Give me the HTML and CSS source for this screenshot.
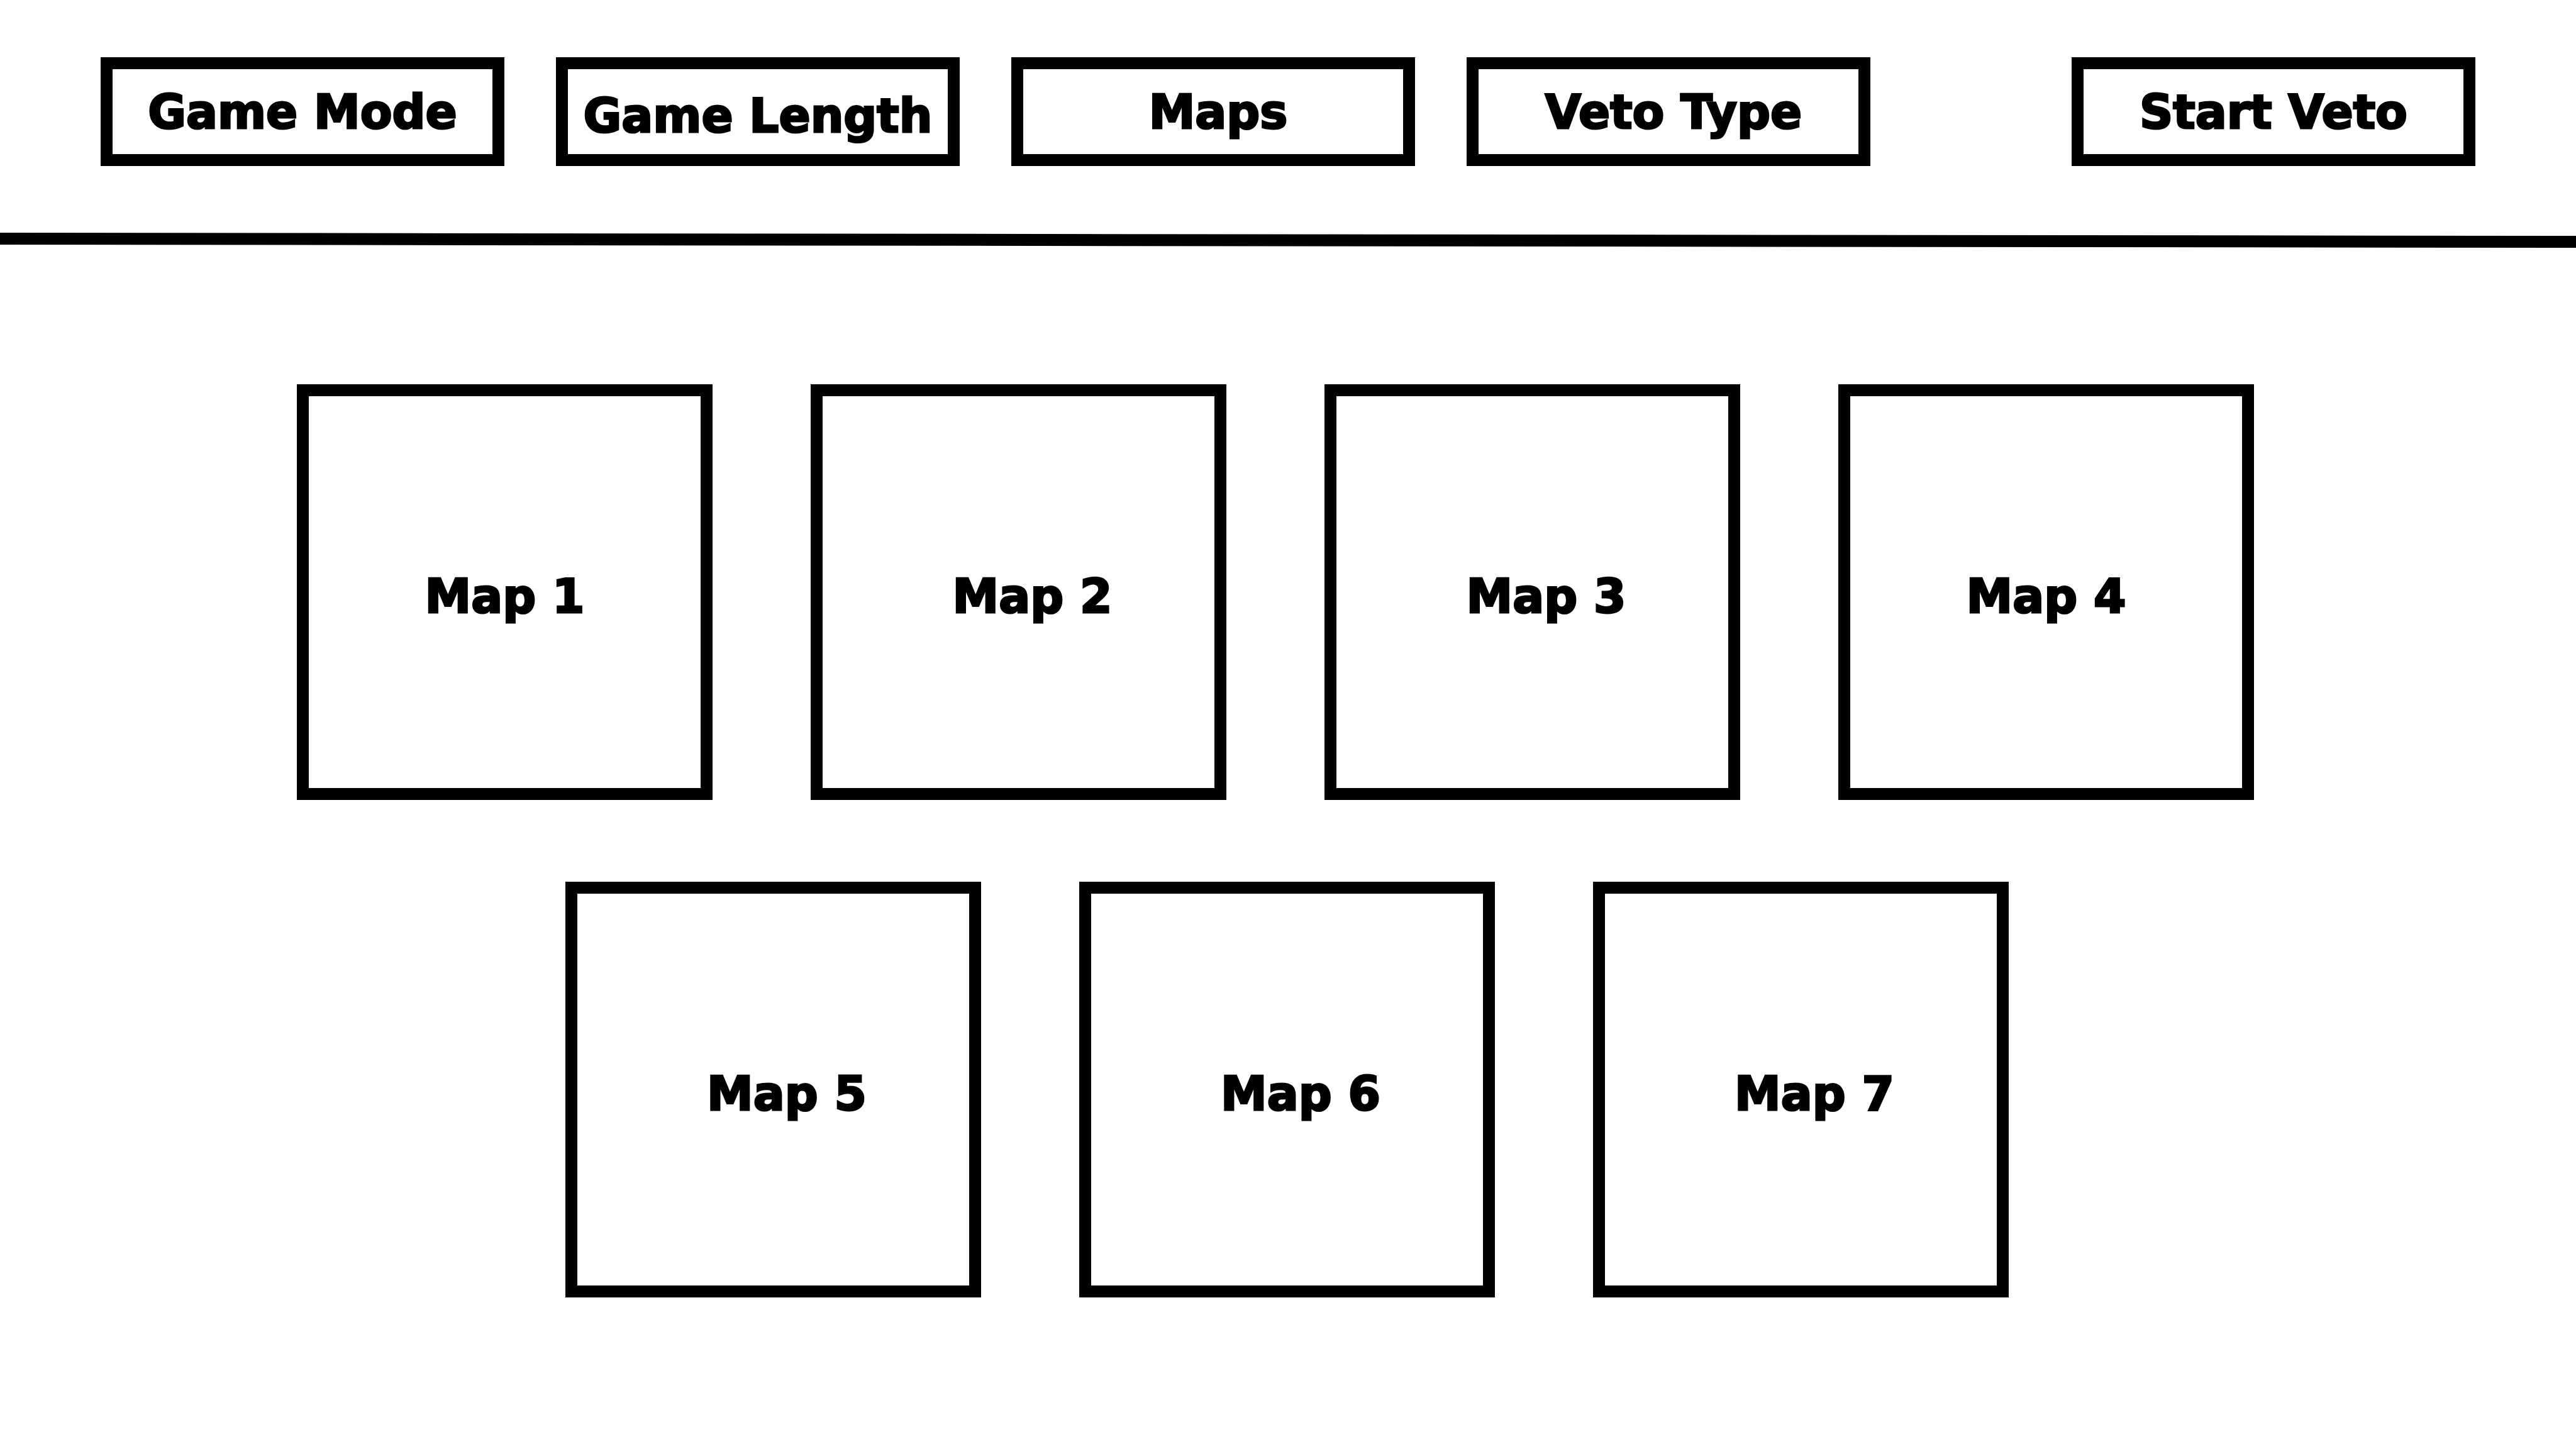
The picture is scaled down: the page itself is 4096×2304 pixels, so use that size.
FILE: index.html
```
<!DOCTYPE html>
<html lang="en">
<head>
  <meta charset="utf-8">
  <meta name="viewport" content="width=device-width, initial-scale=1">
  <title>Map Veto</title>
  <link rel="stylesheet" href="styles.css">
</head>
<body>
  <header class="toolbar">
    <button class="box option" type="button">Game Mode</button>
    <button class="box option option-low" type="button">Game Length</button>
    <button class="box option option-inset" type="button">Maps</button>
    <button class="box option option-inset" type="button">Veto Type</button>
    <button class="box option option-start" type="button">Start Veto</button>
  </header>

  <svg class="divider" viewBox="0 0 4096 24" preserveAspectRatio="none" aria-hidden="true">
    <polygon points="0,0 4096,5 4096,24 0,19"/>
  </svg>

  <main class="maps">
    <div class="map-row map-row-top">
      <button class="box map" type="button">Map 1</button>
      <button class="box map map-inset" type="button">Map 2</button>
      <button class="box map map-inset" type="button">Map 3</button>
      <button class="box map" type="button">Map 4</button>
    </div>
    <div class="map-row">
      <button class="box map map-inset" type="button">Map 5</button>
      <button class="box map map-inset" type="button">Map 6</button>
      <button class="box map map-inset" type="button">Map 7</button>
    </div>
  </main>
</body>
</html>
```
FILE: styles.css
```
* {
  box-sizing: border-box;
}

body {
  margin: 0;
  background: #fff;
  color: #000;
  font-family: "Arial Black", "DejaVu Sans", sans-serif;
  font-weight: 900;
}

.box {
  display: flex;
  align-items: center;
  justify-content: center;
  margin: 0;
  padding: 0;
  border: 19px solid #000;
  border-radius: 0;
  background: #fff;
  color: inherit;
  font: inherit;
  font-size: 74px;
  line-height: 96px;
  white-space: nowrap;
  -webkit-text-stroke: 3px #000;
  cursor: pointer;
}

.toolbar {
  display: grid;
  grid-template-columns: repeat(4, minmax(0, 1fr)) 156px minmax(0, 1fr);
  column-gap: 82px;
  padding: 91px 160px 106px;
}

.option {
  height: 173px;
}

.option-low {
  padding-top: 12px;
}

.option-inset {
  padding-left: 16px;
}

.option-start {
  grid-column: 6;
}

.divider {
  display: block;
  width: 100%;
  height: 24px;
}

.maps {
  display: flex;
  flex-direction: column;
  gap: 130px;
  padding: 217px 0 130px;
}

.map-row {
  display: flex;
  justify-content: center;
  gap: 156px;
  padding-right: 4px;
}

.map-row-top {
  padding-right: 40px;
}

.map {
  flex: 0 1 661px;
  aspect-ratio: 1;
  padding-top: 12px;
}

.map-inset {
  padding-left: 44px;
}
```
